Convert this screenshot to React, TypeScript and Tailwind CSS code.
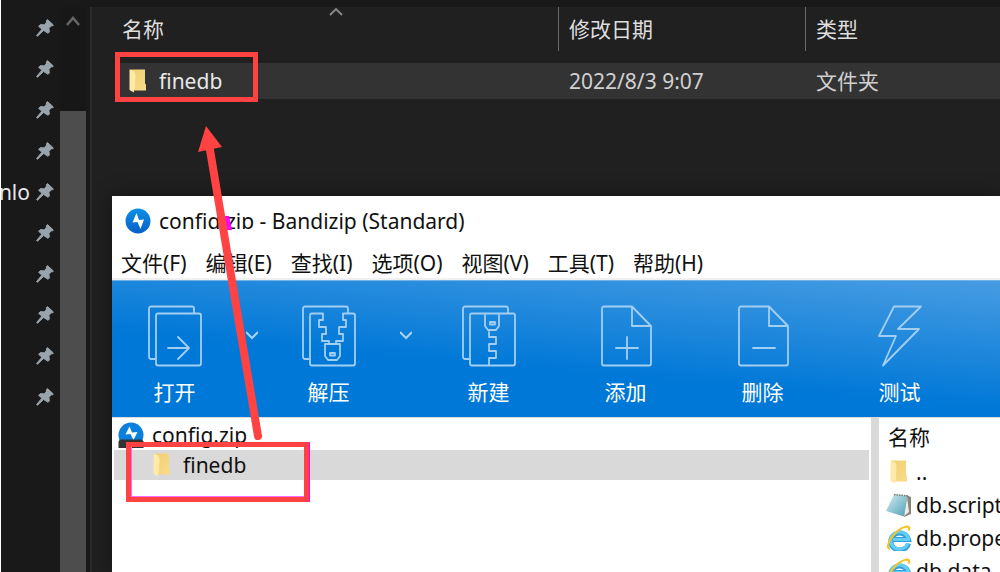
import type { ReactNode } from 'react';

const menus = ['文件(F)', '编辑(E)', '查找(I)', '选项(O)', '视图(V)', '工具(T)', '帮助(H)'];

const pinned = ['', '', '', '', 'nlo', '', '', '', '', ''];

function PinIcon() {
  return (
    <svg className="h-[18px] w-[18px] shrink-0" viewBox="0 0 18 18" fill="#98a3ab" stroke="#98a3ab" strokeWidth="1">
      <path d="M11.500.6 17.400 6l-.9.9-1.500-.1-2.100 2.800.5 3.300-1.300 1.400-4.500-2.800L1.400 17.300l-.8-.8 5.300-6.300-3.300-2.900 1.900-1.700 3.800.3 2.200-2.700-.1-1.600z" />
    </svg>
  );
}

function FolderIcon() {
  return (
    <svg className="h-6 w-[18px] shrink-0" viewBox="0 0 18 24">
      <defs>
        <linearGradient id="folder" x1="0" y1="0" x2="1" y2="1">
          <stop offset="0" stopColor="#f2cf70" />
          <stop offset="1" stopColor="#f7dc8c" />
        </linearGradient>
      </defs>
      <path d="M1 .5h15v14l1 1v6H5z" fill="url(#folder)" />
      <path d="M.5.5 5.500 2.500l1 3-.5 14-1 1v3L.5 21z" fill="#ffe9a9" />
    </svg>
  );
}

function ChevronIcon() {
  return (
    <svg className="h-3 w-3" viewBox="0 0 12 12" fill="none" stroke="#a9d2f3" strokeWidth="2">
      <path d="m0 3 6 6 6-6" />
    </svg>
  );
}

function BandizipIcon() {
  return (
    <svg className="h-[26px] w-[26px] shrink-0" viewBox="0 0 26 26">
      <defs>
        <linearGradient id="bandizip" x1="0" y1="0" x2="0" y2="1">
          <stop offset="0" stopColor="#0d8fe6" />
          <stop offset="1" stopColor="#075fc9" />
        </linearGradient>
      </defs>
      <circle cx="13" cy="13" r="12.500" fill="url(#bandizip)" />
      <path d="m11.500 5-4 9.500 5-.5 3 7 3.500-9.500-5 .5z" fill="#fff" />
    </svg>
  );
}

function ZipFileIcon() {
  return (
    <svg className="h-[26px] w-[26px] shrink-0" viewBox="0 0 26 26">
      <circle cx="13" cy="13" r="12.500" fill="#0a80dc" />
      <path d="m11.500 4.500-4 8 5-.5 3 6 4-8-5.500.5z" fill="#fff" />
      <path d="M2 17.500h22l1.500 2V26H.5v-6.500z" fill="#333" />
      <path d="M8 22h10" stroke="#ddd" strokeWidth="1.500" />
    </svg>
  );
}

function NotepadIcon() {
  return (
    <svg className="h-[26px] w-[26px] shrink-0" viewBox="0 0 26 26">
      <defs>
        <linearGradient id="notepad" x1="0" y1="0" x2="1" y2="1">
          <stop offset="0" stopColor="#d5eef3" />
          <stop offset="1" stopColor="#4d9fb3" />
        </linearGradient>
      </defs>
      <path d="m20 3 5 2v17l-7 3z" fill="#8b8578" />
      <path d="m21 5 2 15-5 4z" fill="#eee" />
      <path d="M8 2.500 21.500 4 18 24.500 0 19z" fill="url(#notepad)" />
      <path d="M8 2.500 22 4" stroke="#777" strokeWidth="1.500" strokeDasharray="1.500 1" />
    </svg>
  );
}

function ExplorerIcon() {
  return (
    <svg className="h-[26px] w-[26px] shrink-0" viewBox="0 0 26 26" fill="none">
      <path
        d="M22.500 18.500A9 8.500 0 1 1 22.500 14.500H7"
        stroke="#2e9fdc"
        strokeWidth="5"
      />
      <path d="M22 18.500A9 8.500 0 1 1 22.500 14.500H7" stroke="#63cdf5" strokeWidth="3.200" />
      <path d="M4 24C-3 23 9 3 21 1.500c3 0 2.500 2 1.500 4" stroke="#f3c52c" strokeWidth="2.200" />
    </svg>
  );
}

function ToolIcon({ children }: { children: ReactNode }) {
  return (
    <svg
      className="h-16 w-14"
      viewBox="0 0 56 64"
      fill="none"
      stroke="#a2cef2"
      strokeWidth="1.800"
      strokeLinejoin="round"
      strokeLinecap="round"
    >
      {children}
    </svg>
  );
}

const backSheet = 'M8 55H4a2 2 0 0 1-2-2V4.500a2 2 0 0 1 2-2h41a2 2 0 0 1 2 2V9';
const page = 'M34 2.500H6a2 2 0 0 0-2 2v55a2 2 0 0 0 2 2h45a2 2 0 0 0 2-2V22zV22h19';

const tools = [
  {
    label: '打开',
    split: true,
    icon: (
      <>
        <path d={backSheet} />
        <rect x="9" y="9.500" width="45" height="52" rx="2" />
        <path d="M21 44h21M31 33l11 11-11 11" />
      </>
    ),
  },
  {
    label: '解压',
    split: true,
    icon: (
      <>
        <path d={backSheet} />
        <path d="M22 9.500H11a2 2 0 0 0-2 2v48a2 2 0 0 0 2 2h41a2 2 0 0 0 2-2v-48a2 2 0 0 0-2-2H42V16h3v7h-7v7h4v7h-7v3h-7v-3h-7v-7h4v-7h-7v-7h4z" />
        <path d="M24 40h15v12l-3 4h-9l-3-4z" />
        <rect x="29" y="49" width="5" height="2.500" />
      </>
    ),
  },
  {
    label: '新建',
    split: false,
    icon: (
      <>
        <path d={backSheet} />
        <rect x="9" y="9.500" width="45" height="52" rx="2" />
        <path d="M24 10v12l3 4h8l3-4V10M28 28v5h7v7h-7v7h7v7h-7v7" />
        <rect x="29" y="18" width="5" height="2.500" />
      </>
    ),
  },
  {
    label: '添加',
    split: false,
    icon: (
      <>
        <path d={page} />
        <path d="M18 44h22M29 33v22" />
      </>
    ),
  },
  {
    label: '删除',
    split: false,
    icon: (
      <>
        <path d={page} />
        <path d="M18 44h22" />
      </>
    ),
  },
  {
    label: '测试',
    split: false,
    icon: <path d="M22 2.500h27L26 25h21L11 61.500 24 32H7z" />,
  },
];

const files = [
  { name: '..', icon: <FolderIcon /> },
  { name: 'db.script', icon: <NotepadIcon /> },
  { name: 'db.properties', icon: <ExplorerIcon /> },
  { name: 'db.data', icon: <ExplorerIcon /> },
];

function NavPane() {
  return (
    <nav className="flex w-[90px] shrink-0 border-l border-white bg-[#191919]">
      <ul className="w-[59px] overflow-hidden">
        {pinned.map((name, i) => (
          <li key={i} className="flex h-[41px] items-center justify-end gap-1.5 pr-1.5">
            <span className="text-[#e8e8e8]">{name}</span>
            <PinIcon />
          </li>
        ))}
      </ul>
      <div className="flex w-[26px] flex-col bg-[#171717]">
        <button aria-label="Scroll up" className="flex h-[104px] shrink-0 justify-center pt-1.5">
          <svg className="h-4 w-4" viewBox="0 0 16 16" fill="none" stroke="#666" strokeWidth="2.500">
            <path d="m2 12 6-7 6 7" />
          </svg>
        </button>
        <div className="flex-1 bg-[#4d4d4d]" />
      </div>
    </nav>
  );
}

function FileTable() {
  return (
    <main className="min-w-0 flex-1 overflow-hidden border-l-2 border-[#2b2b2b] bg-[#202020] pl-[23px]">
      <table className="w-full table-fixed text-left">
        <colgroup>
          <col className="w-[443px]" />
          <col className="w-[247px]" />
          <col />
        </colgroup>
        <thead className="text-[#dedede]">
          <tr className="h-14 align-top">
            <th className="p-0 font-normal">
              <div className="flex h-11 items-center pr-2 pl-[7px]">
                <span className="flex-1">名称</span>
                <svg
                  className="h-3 w-4 self-start"
                  viewBox="0 0 16 12"
                  fill="none"
                  stroke="#8a8a8a"
                  strokeWidth="1.800"
                >
                  <path d="m2 8 6-6 6 6" />
                </svg>
                <span className="flex-1" />
              </div>
            </th>
            <th className="p-0 font-normal">
              <div className="flex h-11 items-center border-l border-[#6a6a6a] pl-2.5">修改日期</div>
            </th>
            <th className="p-0 font-normal">
              <div className="flex h-11 items-center border-l border-[#6a6a6a] pl-2.5">类型</div>
            </th>
          </tr>
        </thead>
        <tbody>
          <tr className="h-[36px] bg-[#333] text-[#d0d0d0]">
            <td className="p-0">
              <div className="flex items-center gap-3 pl-3.5 text-[#e8e8e8]">
                <FolderIcon />
                finedb
              </div>
            </td>
            <td className="p-0 pl-[11px]">2022/8/3 9:07</td>
            <td className="p-0 pl-[11px]">文件夹</td>
          </tr>
        </tbody>
      </table>
    </main>
  );
}

function ArchiveWindow() {
  return (
    <section className="absolute top-49 right-0 bottom-0 left-28 flex flex-col overflow-hidden bg-white text-[#111] shadow-[0_0_20px_rgba(0,0,0,0.4)]">
      <header className="flex h-[50px] shrink-0 items-center gap-2 pl-[13px]">
        <BandizipIcon />
        <h1 className="flex items-center whitespace-pre">
          <span className="flex h-4 items-center overflow-hidden">config.zip</span>
          <span> - Bandizip (Standard)</span>
        </h1>
      </header>
      <div role="menubar" className="flex h-[34px] shrink-0 items-center gap-[19px] border-b-2 border-[#f0f0f0] pt-0.5 pl-[9px]">
        {menus.map((menu) => (
          <button key={menu} role="menuitem" className="shrink-0">
            {menu}
          </button>
        ))}
      </div>
      <div className="flex h-[137px] shrink-0 border-t border-[#6fb3e8] bg-[linear-gradient(185deg,#479ce2_0%,#0078d7_60%)] text-white">
        {tools.map((tool) => (
          <div key={tool.label} className="flex shrink-0">
            <button className={`flex flex-col items-center pt-[23px] ${tool.split ? 'w-[125px]' : 'w-[137px]'}`}>
              <ToolIcon>{tool.icon}</ToolIcon>
              <span className="mt-2.5">{tool.label}</span>
            </button>
            {tool.split && (
              <button aria-label={`${tool.label}选项`} className="flex w-[29px] justify-center pt-12">
                <ChevronIcon />
              </button>
            )}
          </div>
        ))}
      </div>
      <div className="flex min-h-0 flex-1 border-t border-[#d9d9d9]">
        <ul className="min-w-0 flex-1 px-0.5 pt-0.5">
          <li className="flex h-[30px] items-center gap-2 pl-1">
            <ZipFileIcon />
            config.zip
          </li>
          <li className="flex h-[30px] items-center gap-3 bg-[#d9d9d9] pl-[39px]">
            <FolderIcon />
            finedb
          </li>
        </ul>
        <div className="w-2 shrink-0 bg-[#d9d9d9]" />
        <div className="w-[121px] shrink-0 overflow-hidden pl-[7px]">
          <div className="flex h-[37px] items-center pl-0.5">名称</div>
          <ul>
            {files.map((file) => (
              <li key={file.name} className="flex h-[33px] items-center gap-1 whitespace-nowrap">
                <span className="flex w-[26px] shrink-0 justify-center">{file.icon}</span>
                {file.name}
              </li>
            ))}
          </ul>
        </div>
      </div>
    </section>
  );
}

function Annotations() {
  return (
    <div className="pointer-events-none absolute inset-0">
      <div className="absolute top-[52px] left-[115px] h-[50px] w-[143px] border-5 border-[#ff4343]" />
      <div className="absolute top-[442px] left-[126px] h-[60px] w-[184px] border-r border-[#f0f]">
        <div className="h-full border-5 border-[#ff4343]">
          <div className="h-full border-b border-l border-[#ff6aff]" />
        </div>
      </div>
      <svg className="absolute inset-0 h-full w-full">
        <path d="M224 216h5l3 14h-5z" fill="#f0f" />
        <path d="m210 150 48 286" stroke="#ff4343" strokeWidth="8" strokeLinecap="round" />
        <path d="m206 126 16 21-24 5z" fill="#ff4343" />
      </svg>
    </div>
  );
}

export default function App() {
  return (
    <div className="relative flex h-screen flex-col overflow-hidden bg-[#191919] font-['Noto_Sans','Noto_Sans_CJK_SC',sans-serif] text-[21px] leading-7">
      <div className="h-[7px] shrink-0 border-l border-white" />
      <div className="flex min-h-0 flex-1">
        <NavPane />
        <FileTable />
      </div>
      <ArchiveWindow />
      <Annotations />
    </div>
  );
}
